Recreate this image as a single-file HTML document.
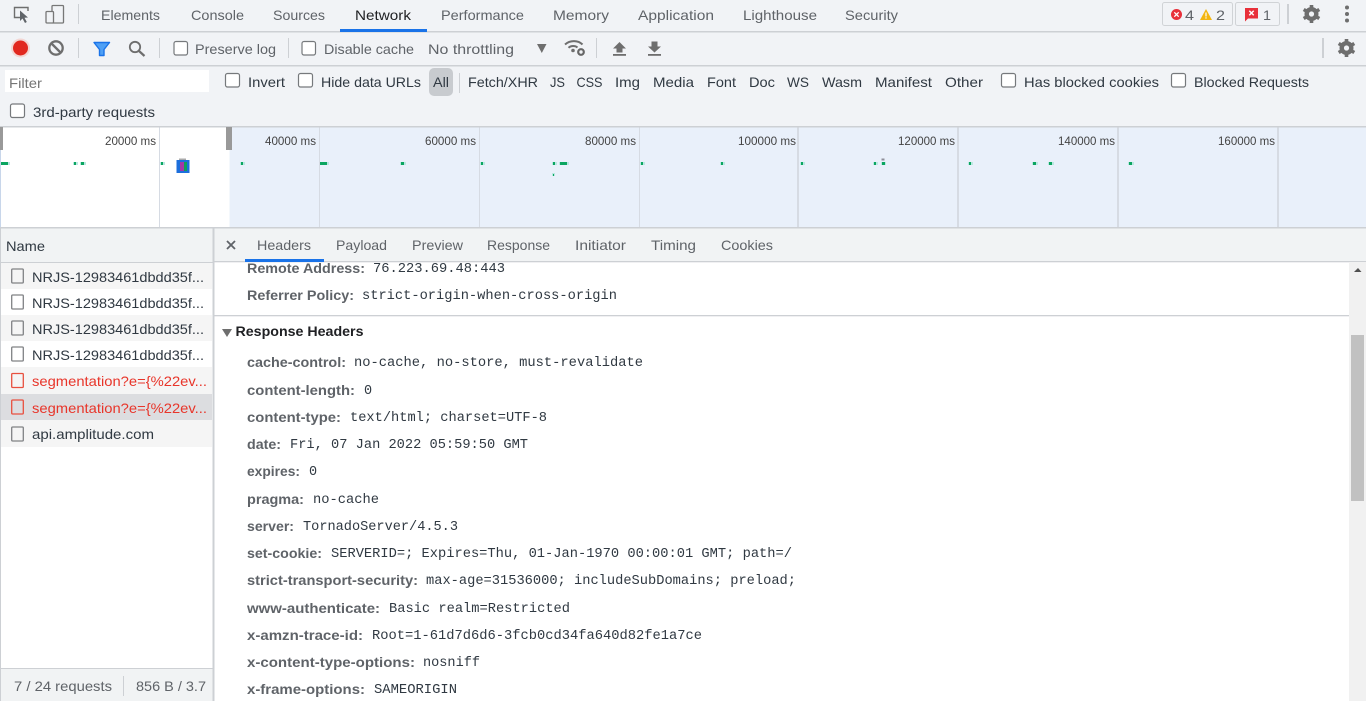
<!DOCTYPE html>
<html><head><meta charset="utf-8"><title>Network</title>
<style>
html,body{margin:0;padding:0;width:1366px;height:701px;overflow:hidden;background:#fff}
svg{display:block}
text{font-family:"Liberation Sans",sans-serif;font-size:14px;fill:#5f6368}
.d{fill:#303942}
.k{fill:#202124}
.n{font-weight:bold;font-size:13.5px;fill:#5f6368}
.v{font-family:"Liberation Mono",monospace;font-size:13.5px;fill:#303942;transform:translateY(-1px)}
.r{fill:#e8352a}
.t{font-size:12px;fill:#444}
.cb{fill:#fff;stroke:#76797c;stroke-width:1.2}
.ic{fill:#6e6e6e}
.g{fill:#0ba560}
.gl{fill:#b9e8e0}
</style></head><body>
<svg xmlns="http://www.w3.org/2000/svg" width="1366" height="701" viewBox="0 0 1366 701">
<!-- backgrounds -->
<rect width="1366" height="127" fill="#f1f3f6"/>
<rect y="31" width="1366" height="1.5" fill="#cdd0d4"/>
<rect y="65" width="1366" height="1.5" fill="#cdd0d4"/>
<rect y="126" width="1366" height="1.5" fill="#cdd0d4"/>
<!-- top tabs -->
<g fill="none" stroke="#6e6e6e" stroke-width="1.4"><path d="M20 17.500H14.500V7.500H28V11"/></g>
<path d="M20 10.500L20 21L22.500 18.500L25 23L26.800 22L24.500 17.800L28 17.500Z" fill="#5f6368"/>
<g fill="none" stroke="#777" stroke-width="1.3"><rect x="52" y="5.500" width="11.500" height="17.500" rx="1"/><rect x="46" y="11.500" width="7.500" height="11.500" rx="1" fill="#f1f3f6"/></g>
<rect x="78" y="4" width="1" height="20" fill="#cdd0d4"/>
<text x="101" y="20" textLength="59" lengthAdjust="spacingAndGlyphs">Elements</text>
<text x="191" y="20" textLength="53" lengthAdjust="spacingAndGlyphs">Console</text>
<text x="273" y="20" textLength="52" lengthAdjust="spacingAndGlyphs">Sources</text>
<text class="k" x="355" y="20" textLength="56" lengthAdjust="spacingAndGlyphs">Network</text>
<rect x="340" y="29" width="87" height="3" fill="#1a73e8"/>
<text x="441" y="20" textLength="83" lengthAdjust="spacingAndGlyphs">Performance</text>
<text x="553" y="20" textLength="56" lengthAdjust="spacingAndGlyphs">Memory</text>
<text x="638" y="20" textLength="76" lengthAdjust="spacingAndGlyphs">Application</text>
<text x="743" y="20" textLength="74" lengthAdjust="spacingAndGlyphs">Lighthouse</text>
<text x="845" y="20" textLength="53" lengthAdjust="spacingAndGlyphs">Security</text>
<!-- badges -->
<rect x="1162.500" y="2.500" width="70" height="23" rx="2" fill="#f1f3f6" stroke="#d0d3d6"/>
<circle cx="1176.500" cy="14.500" r="5.500" fill="#e8303a"/>
<path d="M1174.300 12.300L1178.700 16.700M1178.700 12.300L1174.300 16.700" stroke="#fff" stroke-width="1.300"/>
<text x="1185" y="20" textLength="9" lengthAdjust="spacingAndGlyphs">4</text>
<path d="M1206 9L1212 20H1200Z" fill="#f3b50f"/><rect x="1205.400" y="12.500" width="1.200" height="4" fill="#fff"/><rect x="1205.400" y="17.300" width="1.200" height="1.300" fill="#fff"/>
<text x="1216" y="20" textLength="9" lengthAdjust="spacingAndGlyphs">2</text>
<rect x="1235.500" y="2.500" width="44" height="23" rx="2" fill="#f1f3f6" stroke="#d0d3d6"/>
<path d="M1245 8H1258V18.500H1248L1245 21.500Z" fill="#e8303a"/>
<path d="M1249.300 10.800L1253.700 15.200M1253.700 10.800L1249.300 15.200" stroke="#fff" stroke-width="1.400"/>
<text x="1263" y="20" textLength="8" lengthAdjust="spacingAndGlyphs">1</text>
<rect x="1287" y="4" width="2" height="20" fill="#cdd0d4"/>
<g fill="#6e6e6e"><circle cx="1311.500" cy="14" r="7"/><g stroke="#6e6e6e" stroke-width="3.600"><path d="M1311.500 5V23"/><path d="M1303.700 9.500L1319.300 18.500"/><path d="M1303.700 18.500L1319.300 9.500"/></g><circle cx="1311.500" cy="14" r="2.600" fill="#f1f3f6"/></g>
<g fill="#6e6e6e"><circle cx="1347" cy="7.500" r="2"/><circle cx="1347" cy="14" r="2"/><circle cx="1347" cy="20.500" r="2"/></g>
<!-- second toolbar -->
<circle cx="20.500" cy="48" r="9.500" fill="#f3d6d3"/>
<circle cx="20.500" cy="48" r="7.500" fill="#e1281f"/>
<circle cx="56" cy="48" r="6.700" fill="none" stroke="#6e6e6e" stroke-width="2.300"/>
<path d="M51.500 43.500L60.500 52.500" stroke="#6e6e6e" stroke-width="2.300"/>
<rect x="78" y="38" width="1" height="20" fill="#cdd0d4"/>
<path d="M94 42.500H109.500L104 49.500V55.500H99.500V49.500Z" fill="#4fa0f5" stroke="#1a73e8" stroke-width="1.400" stroke-linejoin="round"/>
<circle cx="135" cy="47" r="5.200" fill="none" stroke="#6e6e6e" stroke-width="1.800"/>
<path d="M139 51L144.500 56" stroke="#6e6e6e" stroke-width="2.200"/>
<rect x="159" y="38" width="1" height="20" fill="#cdd0d4"/>
<rect class="cb" x="174" y="41.500" width="13.500" height="13.500" rx="2"/>
<text x="195" y="54" textLength="81" lengthAdjust="spacingAndGlyphs">Preserve log</text>
<rect x="288" y="38" width="1" height="20" fill="#cdd0d4"/>
<rect class="cb" x="302" y="41.500" width="13.500" height="13.500" rx="2"/>
<text x="324" y="54" textLength="90" lengthAdjust="spacingAndGlyphs">Disable cache</text>
<text x="428" y="54" textLength="86" lengthAdjust="spacingAndGlyphs">No throttling</text>
<path d="M537 44H546.500L541.800 53Z" fill="#6e6e6e"/>
<g fill="none" stroke="#6e6e6e" stroke-width="2"><path d="M565 44.500C570 40 578 40 582.500 44.500"/><path d="M568.500 47.800C571 45.500 575 45.500 577.500 47.500"/></g>
<circle cx="573" cy="50.500" r="1.800" fill="#6e6e6e"/>
<circle cx="581" cy="52" r="2.800" fill="none" stroke="#666" stroke-width="2.200"/>
<rect x="596" y="38" width="1" height="20" fill="#cdd0d4"/>
<path d="M619.500 42L626 48.500H622.500V52.500H616.500V48.500H613Z" class="ic"/><rect x="613" y="54" width="13" height="1.800" class="ic"/>
<path d="M651.500 41.500H657.500V46.500H661L654.500 52.500L648 46.500H651.500Z" class="ic"/><rect x="648" y="54" width="13" height="1.800" class="ic"/>
<rect x="1322" y="38" width="2" height="20" fill="#cdd0d4"/>
<g fill="#6e6e6e"><circle cx="1346.500" cy="48" r="7"/><g stroke="#6e6e6e" stroke-width="3.600"><path d="M1346.500 39V57"/><path d="M1338.700 43.500L1354.300 52.500"/><path d="M1338.700 52.500L1354.300 43.500"/></g><circle cx="1346.500" cy="48" r="2.600" fill="#f1f3f6"/></g>
<!-- filter row -->
<rect x="5" y="70" width="204" height="22" fill="#fff"/>
<text x="9" y="88" textLength="33" lengthAdjust="spacingAndGlyphs" style="fill:#757575">Filter</text>
<rect class="cb" x="225.500" y="73.500" width="14" height="13.500" rx="2"/>
<text class="d" x="248" y="87" textLength="37" lengthAdjust="spacingAndGlyphs">Invert</text>
<rect class="cb" x="298.500" y="73.500" width="14" height="13.500" rx="2"/>
<text class="d" x="321" y="87" textLength="100" lengthAdjust="spacingAndGlyphs">Hide data URLs</text>
<rect x="429" y="68" width="24" height="28" rx="5" fill="#c8cbcf"/>
<text class="d" x="433" y="87" textLength="16" lengthAdjust="spacingAndGlyphs">All</text>
<rect x="459" y="73" width="1" height="20" fill="#cdd0d4"/>
<text class="d" x="468" y="87" textLength="70" lengthAdjust="spacingAndGlyphs">Fetch/XHR</text>
<text class="d" x="550" y="87" textLength="15" lengthAdjust="spacingAndGlyphs">JS</text>
<text class="d" x="576.500" y="87" textLength="26" lengthAdjust="spacingAndGlyphs">CSS</text>
<text class="d" x="615" y="87" textLength="25" lengthAdjust="spacingAndGlyphs">Img</text>
<text class="d" x="653" y="87" textLength="41" lengthAdjust="spacingAndGlyphs">Media</text>
<text class="d" x="707" y="87" textLength="29" lengthAdjust="spacingAndGlyphs">Font</text>
<text class="d" x="749" y="87" textLength="26" lengthAdjust="spacingAndGlyphs">Doc</text>
<text class="d" x="787" y="87" textLength="22" lengthAdjust="spacingAndGlyphs">WS</text>
<text class="d" x="822" y="87" textLength="40" lengthAdjust="spacingAndGlyphs">Wasm</text>
<text class="d" x="875" y="87" textLength="57" lengthAdjust="spacingAndGlyphs">Manifest</text>
<text class="d" x="945" y="87" textLength="38" lengthAdjust="spacingAndGlyphs">Other</text>
<rect class="cb" x="1001.500" y="73.500" width="14" height="13.500" rx="2"/>
<text class="d" x="1024" y="87" textLength="135" lengthAdjust="spacingAndGlyphs">Has blocked cookies</text>
<rect class="cb" x="1171.500" y="73.500" width="14" height="13.500" rx="2"/>
<text class="d" x="1194" y="87" textLength="115" lengthAdjust="spacingAndGlyphs">Blocked Requests</text>
<rect class="cb" x="10.500" y="104" width="14" height="13.500" rx="2"/>
<text class="d" x="33" y="117" textLength="122" lengthAdjust="spacingAndGlyphs">3rd-party requests</text>
<!-- overview -->
<rect x="0" y="127.500" width="1366" height="100" fill="#e9f0fa"/>
<rect x="1" y="127.500" width="228.500" height="100" fill="#fff"/>
<rect x="0" y="127.500" width="1" height="100" fill="#c8d6ea"/>
<g fill="#d6dbe3"><rect x="159" y="127.500" width="1" height="100"/><rect x="319" y="127.500" width="1" height="100"/><rect x="479" y="127.500" width="1" height="100"/><rect x="639" y="127.500" width="1" height="100"/><rect x="797" y="127.500" width="2" height="100"/><rect x="957" y="127.500" width="2" height="100"/><rect x="1117" y="127.500" width="2" height="100"/><rect x="1277" y="127.500" width="2" height="100"/></g>
<rect x="0" y="127" width="3" height="23" fill="#999"/>
<rect x="226" y="127" width="6" height="23" fill="#999"/>
<text class="t" x="105" y="145" textLength="51" lengthAdjust="spacingAndGlyphs">20000 ms</text>
<text class="t" x="265" y="145" textLength="51" lengthAdjust="spacingAndGlyphs">40000 ms</text>
<text class="t" x="425" y="145" textLength="51" lengthAdjust="spacingAndGlyphs">60000 ms</text>
<text class="t" x="585" y="145" textLength="51" lengthAdjust="spacingAndGlyphs">80000 ms</text>
<text class="t" x="738" y="145" textLength="58" lengthAdjust="spacingAndGlyphs">100000 ms</text>
<text class="t" x="898" y="145" textLength="57" lengthAdjust="spacingAndGlyphs">120000 ms</text>
<text class="t" x="1058" y="145" textLength="57" lengthAdjust="spacingAndGlyphs">140000 ms</text>
<text class="t" x="1218" y="145" textLength="57" lengthAdjust="spacingAndGlyphs">160000 ms</text>
<!-- marks -->
<g class="gl"><rect x="1" y="162" width="9" height="3"/><rect x="73" y="162" width="5" height="3"/><rect x="80" y="162" width="6" height="3"/><rect x="160" y="162" width="5" height="3"/><rect x="240" y="162" width="5" height="3"/><rect x="320" y="162" width="9" height="3"/><rect x="400" y="162" width="6" height="3"/><rect x="480" y="162" width="5" height="3"/><rect x="552" y="162" width="5" height="3"/><rect x="559" y="162" width="10" height="3"/><rect x="552" y="173" width="3" height="3"/><rect x="640" y="162" width="5" height="3"/><rect x="720" y="162" width="5" height="3"/><rect x="800" y="162" width="5" height="3"/><rect x="873" y="162" width="5" height="3"/><rect x="881" y="162" width="5" height="3"/><rect x="968" y="162" width="5" height="3"/><rect x="1032" y="162" width="6" height="3"/><rect x="1048" y="162" width="6" height="3"/><rect x="1128" y="162" width="6" height="3"/></g>
<g class="g"><rect x="1" y="162" width="7" height="3"/><rect x="74" y="162" width="2" height="3"/><rect x="81" y="162" width="3" height="3"/><rect x="161" y="162" width="2" height="3"/><rect x="241" y="162" width="2" height="3"/><rect x="320" y="162" width="7" height="3"/><rect x="401" y="162" width="3" height="3"/><rect x="481" y="162" width="2" height="3"/><rect x="553" y="162" width="2" height="3"/><rect x="560" y="162" width="7" height="3"/><rect x="553" y="174" width="1" height="2"/><rect x="641" y="162" width="2" height="3"/><rect x="721" y="162" width="2" height="3"/><rect x="801" y="162" width="2" height="3"/><rect x="874" y="162" width="2" height="3"/><rect x="882" y="162" width="3" height="3"/><rect x="969" y="162" width="2" height="3"/><rect x="1033" y="162" width="3" height="3"/><rect x="1049" y="162" width="3" height="3"/><rect x="1129" y="162" width="3" height="3"/></g>
<rect x="881.500" y="158.500" width="3" height="2" fill="#8f8f99"/>
<rect x="179" y="158.500" width="7" height="2" fill="#aaa"/>
<rect x="176.500" y="160" width="13" height="13" fill="#1c6fdc"/>
<rect x="180" y="162" width="4" height="9" fill="#a437a8"/>
<rect x="184" y="162" width="3" height="9" fill="#0ea05c"/>
<rect y="227" width="1366" height="1.500" fill="#cdd0d4"/>
<!-- left panel -->
<rect x="0" y="228.500" width="213" height="34" fill="#f1f3f4"/>
<text class="d" x="6" y="251" textLength="39" lengthAdjust="spacingAndGlyphs">Name</text>
<rect y="262" width="213" height="1" fill="#cdd0d4"/>
<rect x="1" y="263" width="211" height="26" fill="#f5f5f5"/>
<rect x="1" y="315" width="211" height="26" fill="#f5f5f5"/>
<rect x="1" y="367" width="211" height="27" fill="#f5f5f5"/>
<rect x="1" y="394" width="211" height="26" fill="#dcdde0"/>
<rect x="1" y="420" width="211" height="27" fill="#f5f5f5"/>
<rect x="0" y="228" width="1" height="473" fill="#cdd0d4"/>
<rect x="212.500" y="228" width="2" height="473" fill="#cdd0d4"/>
<g fill="none" stroke="#808285" stroke-width="1.300">
<rect x="11.700" y="269" width="11.600" height="14" rx="1"/>
<rect x="11.700" y="295" width="11.600" height="14" rx="1"/>
<rect x="11.700" y="321" width="11.600" height="14" rx="1"/>
<rect x="11.700" y="347" width="11.600" height="14" rx="1"/>
<rect x="11.700" y="427" width="11.600" height="14" rx="1"/>
</g>
<g fill="none" stroke="#e8503f" stroke-width="1.300">
<rect x="11.700" y="373.500" width="11.600" height="14" rx="1"/>
<rect x="11.700" y="400" width="11.600" height="14" rx="1"/>
</g>
<text class="d" x="32" y="282" textLength="172" lengthAdjust="spacingAndGlyphs">NRJS-12983461dbdd35f...</text>
<text class="d" x="32" y="308" textLength="172" lengthAdjust="spacingAndGlyphs">NRJS-12983461dbdd35f...</text>
<text class="d" x="32" y="334" textLength="172" lengthAdjust="spacingAndGlyphs">NRJS-12983461dbdd35f...</text>
<text class="d" x="32" y="360" textLength="172" lengthAdjust="spacingAndGlyphs">NRJS-12983461dbdd35f...</text>
<text class="r" x="32" y="386" textLength="175" lengthAdjust="spacingAndGlyphs">segmentation?e={%22ev...</text>
<text class="r" x="32" y="413" textLength="175" lengthAdjust="spacingAndGlyphs">segmentation?e={%22ev...</text>
<text class="d" x="32" y="439" textLength="122" lengthAdjust="spacingAndGlyphs">api.amplitude.com</text>
<rect x="1" y="668" width="211.500" height="33" fill="#f1f3f4"/>
<rect x="1" y="668" width="211.500" height="1" fill="#cdd0d4"/>
<text x="14" y="691" textLength="98" lengthAdjust="spacingAndGlyphs">7 / 24 requests</text>
<rect x="123" y="676" width="1" height="20" fill="#cdd0d4"/>
<text x="136" y="691" textLength="70" lengthAdjust="spacingAndGlyphs">856 B / 3.7</text>
<!-- detail tabs -->
<rect x="214.500" y="228.500" width="1152" height="33" fill="#f1f3f4"/>
<rect x="214.500" y="261" width="1152" height="1.300" fill="#cdd0d4"/>
<path d="M227 241L235 249M235 241L227 249" stroke="#5f6368" stroke-width="1.800"/>
<text x="257" y="250" textLength="54" lengthAdjust="spacingAndGlyphs">Headers</text>
<rect x="245" y="259" width="79" height="3" fill="#1a73e8"/>
<text x="336" y="250" textLength="51" lengthAdjust="spacingAndGlyphs">Payload</text>
<text x="412" y="250" textLength="51" lengthAdjust="spacingAndGlyphs">Preview</text>
<text x="487" y="250" textLength="63" lengthAdjust="spacingAndGlyphs">Response</text>
<text x="575" y="250" textLength="51" lengthAdjust="spacingAndGlyphs">Initiator</text>
<text x="651" y="250" textLength="45" lengthAdjust="spacingAndGlyphs">Timing</text>
<text x="721" y="250" textLength="52" lengthAdjust="spacingAndGlyphs">Cookies</text>
<!-- detail content -->
<text class="n" x="247" y="273" textLength="118" lengthAdjust="spacingAndGlyphs">Remote Address:</text>
<text class="v" x="373" y="273" textLength="132" lengthAdjust="spacingAndGlyphs">76.223.69.48:443</text>
<text class="n" x="247" y="300" textLength="107" lengthAdjust="spacingAndGlyphs">Referrer Policy:</text>
<text class="v" x="362" y="300" textLength="255" lengthAdjust="spacingAndGlyphs">strict-origin-when-cross-origin</text>
<rect x="214.500" y="315" width="1134.500" height="1.300" fill="#cdd0d4"/>
<path d="M222 329H232L227 337Z" fill="#6e6e6e"/>
<text class="n" style="fill:#202124" x="235.500" y="336" textLength="128" lengthAdjust="spacingAndGlyphs">Response Headers</text>
<text class="n" x="247" y="367" textLength="99" lengthAdjust="spacingAndGlyphs">cache-control:</text>
<text class="v" x="354" y="367" textLength="289" lengthAdjust="spacingAndGlyphs">no-cache, no-store, must-revalidate</text>
<text class="n" x="247" y="395" textLength="108" lengthAdjust="spacingAndGlyphs">content-length:</text>
<text class="v" x="364" y="395">0</text>
<text class="n" x="247" y="422" textLength="94" lengthAdjust="spacingAndGlyphs">content-type:</text>
<text class="v" x="350" y="422" textLength="197" lengthAdjust="spacingAndGlyphs">text/html; charset=UTF-8</text>
<text class="n" x="247" y="449" textLength="34" lengthAdjust="spacingAndGlyphs">date:</text>
<text class="v" x="290" y="449" textLength="238" lengthAdjust="spacingAndGlyphs">Fri, 07 Jan 2022 05:59:50 GMT</text>
<text class="n" x="247" y="476" textLength="53" lengthAdjust="spacingAndGlyphs">expires:</text>
<text class="v" x="309" y="476">0</text>
<text class="n" x="247" y="504" textLength="57" lengthAdjust="spacingAndGlyphs">pragma:</text>
<text class="v" x="313" y="504" textLength="66" lengthAdjust="spacingAndGlyphs">no-cache</text>
<text class="n" x="247" y="531" textLength="47" lengthAdjust="spacingAndGlyphs">server:</text>
<text class="v" x="303" y="531" textLength="155" lengthAdjust="spacingAndGlyphs">TornadoServer/4.5.3</text>
<text class="n" x="247" y="558" textLength="75" lengthAdjust="spacingAndGlyphs">set-cookie:</text>
<text class="v" x="331" y="558" textLength="461" lengthAdjust="spacingAndGlyphs">SERVERID=; Expires=Thu, 01-Jan-1970 00:00:01 GMT; path=/</text>
<text class="n" x="247" y="585" textLength="171" lengthAdjust="spacingAndGlyphs">strict-transport-security:</text>
<text class="v" x="426" y="585" textLength="370" lengthAdjust="spacingAndGlyphs">max-age=31536000; includeSubDomains; preload;</text>
<text class="n" x="247" y="613" textLength="133" lengthAdjust="spacingAndGlyphs">www-authenticate:</text>
<text class="v" x="389" y="613" textLength="181" lengthAdjust="spacingAndGlyphs">Basic realm=Restricted</text>
<text class="n" x="247" y="640" textLength="116" lengthAdjust="spacingAndGlyphs">x-amzn-trace-id:</text>
<text class="v" x="372" y="640" textLength="330" lengthAdjust="spacingAndGlyphs">Root=1-61d7d6d6-3fcb0cd34fa640d82fe1a7ce</text>
<text class="n" x="247" y="667" textLength="168" lengthAdjust="spacingAndGlyphs">x-content-type-options:</text>
<text class="v" x="423" y="667" textLength="57" lengthAdjust="spacingAndGlyphs">nosniff</text>
<text class="n" x="247" y="694" textLength="118" lengthAdjust="spacingAndGlyphs">x-frame-options:</text>
<text class="v" x="374" y="694" textLength="83" lengthAdjust="spacingAndGlyphs">SAMEORIGIN</text>
<!-- scrollbar -->
<rect x="1349" y="262" width="17" height="439" fill="#f1f1f1"/>
<path d="M1354 272L1358 268L1361.500 272Z" fill="#505050"/>
<rect x="1351" y="335" width="13" height="166" fill="#c1c1c1"/>
</svg>
</body></html>
